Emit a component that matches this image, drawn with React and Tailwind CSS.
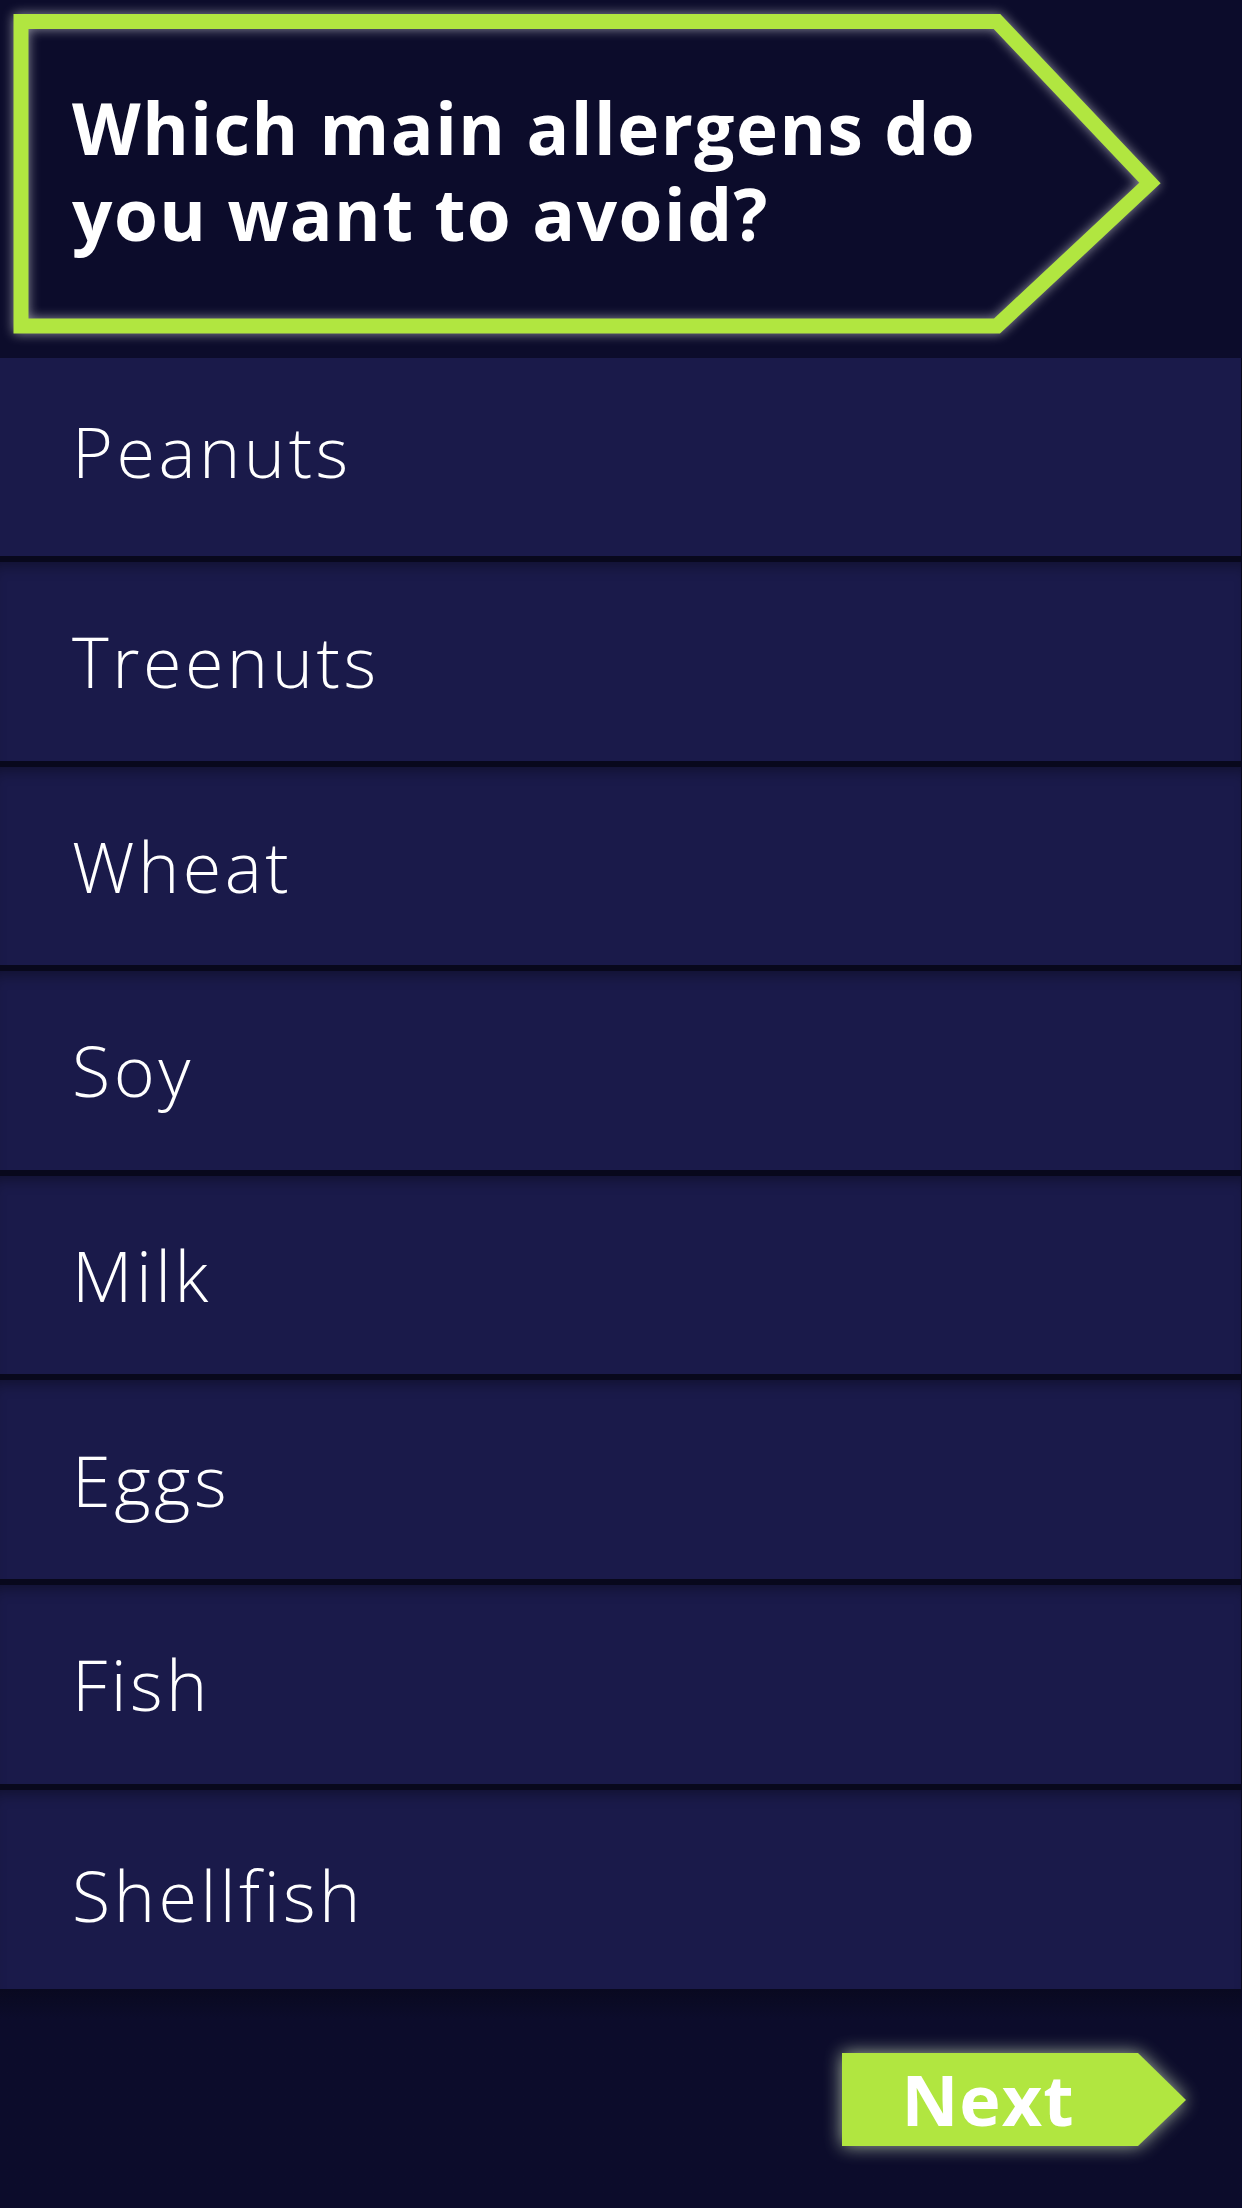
import React from 'react';

const allergens = ['Peanuts', 'Treenuts', 'Wheat', 'Soy', 'Milk', 'Eggs', 'Fish', 'Shellfish'];

const rowClass = (i, last) => {
  if (last) {
    return 'h-[199px] flex items-center pl-[72px] pt-[12px] bg-[#1a1a4a] border-r border-[#0a0a22] shadow-[inset_0_12px_14px_-8px_rgba(0,0,0,0.35)]';
  }
  if (i === 0) {
    return 'h-[204px] border-b-[6px] border-r border-[#08081c] flex items-center pl-[72px] pb-[13px] bg-[#1a1a4a]';
  }
  return 'h-[204.6px] border-b-[6px] border-r border-[#08081c] flex items-center pl-[72px] bg-[#1a1a4a] shadow-[inset_0_12px_14px_-8px_rgba(0,0,0,0.35)]';
};

const App = () => {
  return (
    <div className="w-[1242px] h-[2208px] bg-[#0c0c2b] font-['Open_Sans',sans-serif] text-white overflow-hidden">
      {/* question banner */}
      <div className="relative h-[358px] pt-[85px] pl-[72px]">
        <svg
          className="absolute inset-0 drop-shadow-[0_0_6px_rgba(255,255,255,0.55)]"
          width="1242"
          height="358"
          viewBox="0 0 1242 358"
        >
          <polygon
            points="21,21.5 997,21.5 1150,183 997,326 21,326"
            fill="none"
            stroke="#b1e640"
            strokeWidth="15"
            strokeLinejoin="miter"
          />
        </svg>
        <h1 className="relative text-[71px] font-bold tracking-[1.5px] whitespace-nowrap">
          <div className="h-[86px] leading-[86px]">Which main allergens do</div>
          <div className="h-[86px] leading-[86px]">you want to avoid?</div>
        </h1>
      </div>

      {/* options */}
      <ul>
        {allergens.map((name, i) => (
          <li key={name} className={rowClass(i, i === allergens.length - 1)}>
            <span className="text-[70px] leading-none font-[350] tracking-[3.5px]">{name}</span>
          </li>
        ))}
      </ul>

      {/* footer */}
      <div className="flex justify-end pt-[64px] pr-[56px] bg-gradient-to-b from-[#090920] to-[#0c0c2b] to-[30px] h-[219px]">
        <button className="relative w-[344px] h-[93px] flex items-center">
          <svg
            className="absolute inset-0 drop-shadow-[0_0_9px_rgba(235,255,210,0.7)]"
            width="344"
            height="93"
            viewBox="0 0 344 93"
          >
            <polygon points="0,0 296,0 344,47 296,93 0,93" fill="#b1e640" />
          </svg>
          <span className="relative w-[292px] text-center text-[70px] leading-none font-bold tracking-[1px]">Next</span>
        </button>
      </div>
    </div>
  );
};

export default App;
